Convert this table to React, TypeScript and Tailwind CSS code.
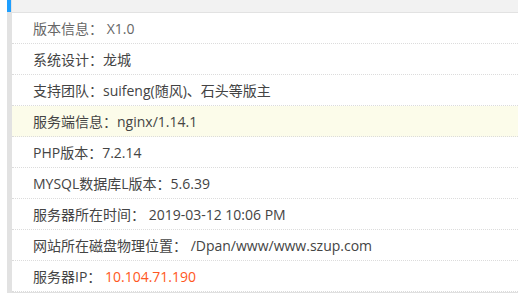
const rows: { label: string; value: string; highlight?: boolean; muted?: boolean; accent?: boolean }[] = [
  { label: "版本信息： ", value: "X1.0", muted: true },
  { label: "系统设计：", value: "龙城" },
  { label: "支持团队：", value: "suifeng(随风)、石头等版主" },
  { label: "服务端信息：", value: "nginx/1.14.1", highlight: true },
  { label: "PHP版本：", value: "7.2.14" },
  { label: "MYSQL数据库L版本：", value: "5.6.39" },
  { label: "服务器所在时间： ", value: "2019-03-12 10:06 PM" },
  { label: "网站所在磁盘物理位置： ", value: "/Dpan/www/www.szup.com" },
  { label: "服务器IP： ", value: "10.104.71.190", accent: true },
];

export default function App() {
  return (
    <div
      className="w-[518px] h-[300px] bg-white pl-[7px] overflow-hidden"
      style={{ fontFamily: '"Open Sans", "Noto Sans CJK SC", sans-serif' }}
    >
      <div className="flex h-[293px]">
        <div className="w-[5px] bg-[#e2e2e2] flex flex-col">
          <div className="h-[12px] w-[4px] bg-[#1e9fff]" />
        </div>
        <div className="flex-1 flex flex-col border-b border-[#e0e0e0]">
          <div className="h-[13px] bg-[#f2f2f2] border-b border-[#e2e2e2]" />
          {rows.map((r) => (
            <div
              key={r.label}
              className={`h-[31px] flex items-center pl-[21px] text-[14px] whitespace-pre border-b border-dotted border-[#dcdcdc] ${
                r.highlight ? "bg-[#fcfcea]" : "bg-white"
              } ${r.muted ? "text-[#666]" : "text-[#444]"}`}
            >
              <span>{r.label}</span>
              <span className={r.accent ? "text-[#ff5722]" : ""}>{r.value}</span>
            </div>
          ))}
        </div>
      </div>
    </div>
  );
}
